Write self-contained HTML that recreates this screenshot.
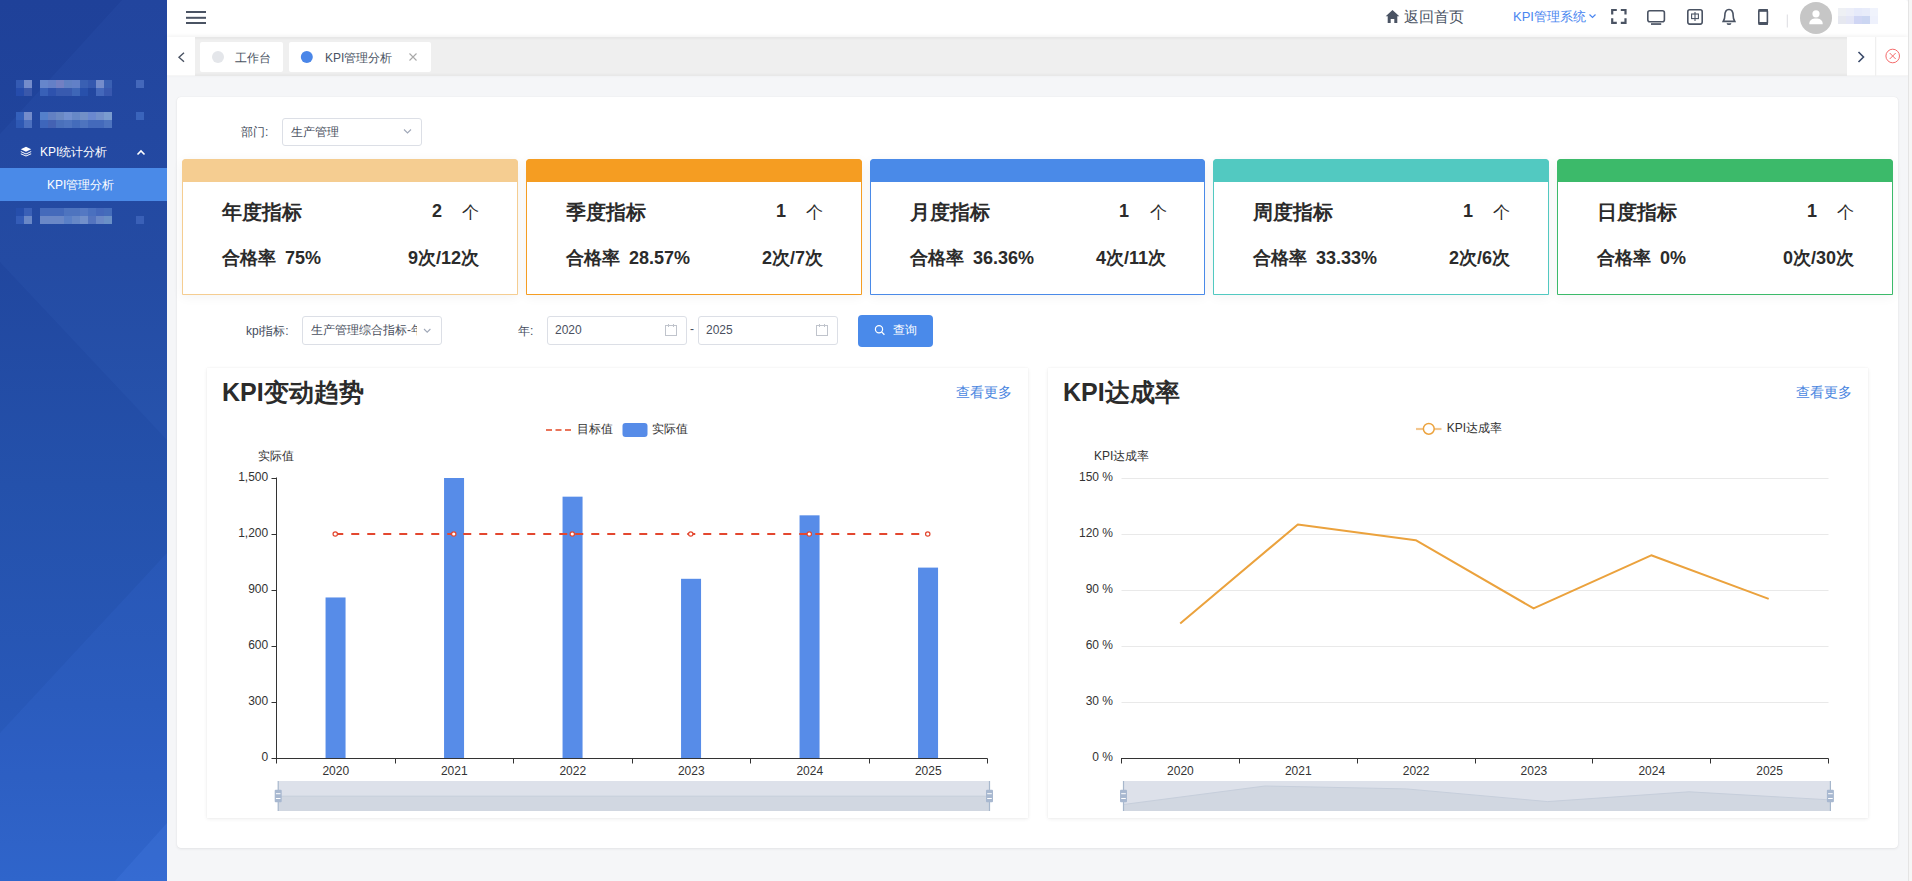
<!DOCTYPE html>
<html><head><meta charset="utf-8">
<style>
*{box-sizing:border-box;margin:0;padding:0}
html,body{width:1912px;height:881px;overflow:hidden;background:#f5f6f8;font-family:"Liberation Sans",sans-serif;color:#333}
.a{position:absolute}
#side{left:0;top:0;width:167px;height:881px;background:linear-gradient(180deg,#1f3e97 0%,#2350a9 45%,#2a5cc0 80%,#2e63c9 100%);overflow:hidden}
#hdr{left:167px;top:0;width:1741px;height:37.5px;background:#fff;border-top-right-radius:3px}
#tabs{left:167px;top:37px;width:1741px;height:38.6px;background:#efefef;box-shadow:inset 0 2px 2px rgba(0,0,0,.035),inset 0 -2px 2px rgba(0,0,0,.03),0 -1px 4px rgba(0,0,0,.06)}
#strip{left:1908px;top:0;width:4px;height:881px;background:#f6f6f6;border-left:1px solid #e4e4e4}
#main{left:177px;top:97px;width:1721px;height:751px;background:#fff;border-radius:4px;box-shadow:0 1px 3px rgba(0,0,0,.07),0 0 1px rgba(0,0,0,.1)}
.card{top:159px;width:336px;height:136px;border:1px solid;border-radius:4px 4px 0 0;background:#fff;box-shadow:0 2px 12px rgba(0,0,0,.05)}
.card .band{position:absolute;left:-1px;top:-1px;right:-1px;height:23px;border-radius:4px 4px 0 0}
.card .t{position:absolute;left:39px;top:37.3px;font-size:20px;font-weight:bold;color:#2b2b2b;line-height:30px}
.card .n{position:absolute;right:75px;top:36px;font-size:18px;font-weight:bold;color:#2b2b2b;line-height:30px}
.card .g{position:absolute;left:279px;top:37.5px;font-size:17px;color:#2b2b2b;line-height:30px}
.card .r{position:absolute;left:39px;top:82.8px;font-size:18px;font-weight:bold;color:#2b2b2b;line-height:30px;white-space:nowrap}
.card .c{position:absolute;right:38px;top:82.8px;font-size:18px;font-weight:bold;color:#2b2b2b;line-height:30px;white-space:nowrap}
.panel{top:368px;height:450px;background:#fff;box-shadow:0 1px 4px rgba(0,0,0,.07),0 0 1px rgba(0,0,0,.08)}
.ptitle{position:absolute;left:15px;top:7px;font-size:25px;font-weight:bold;color:#2b2b2b;line-height:34px}
.more{position:absolute;right:16px;top:14px;font-size:14px;color:#4a86e0;line-height:20px}
.inp{height:29px;border:1px solid #dcdfe6;border-radius:3px;background:#fff;font-size:12px;color:#4a5060;line-height:27px;padding-left:8px;white-space:nowrap;overflow:hidden}
</style></head><body>
<div id="side" class="a">
<svg width="167" height="881" style="position:absolute;left:0;top:0">
<defs><linearGradient id="sg" x1="0" y1="0" x2="0" y2="1">
<stop offset="0" stop-color="#1f4199"/><stop offset="0.3" stop-color="#21479f"/><stop offset="0.55" stop-color="#2451ab"/><stop offset="0.8" stop-color="#2858b8"/><stop offset="1" stop-color="#2d62c6"/></linearGradient></defs>
<rect width="167" height="881" fill="url(#sg)"/>
<polygon points="122,0 167,0 167,440 0,262 0,134" fill="#5a9aff" opacity="0.05"/>
<polygon points="0,733 167,553 167,881 0,881" fill="#4a88ff" opacity="0.09"/>
<polygon points="115,881 167,823 167,881" fill="#5a96ff" opacity="0.14"/>
<rect x="16" y="80" width="8" height="8" fill="#345ab3"/><rect x="24" y="80" width="8" height="8" fill="#748ccb"/><rect x="40" y="80" width="8" height="8" fill="#6686cb"/><rect x="48" y="80" width="8" height="8" fill="#6480c7"/><rect x="56" y="80" width="8" height="8" fill="#7280c3"/><rect x="64" y="80" width="8" height="8" fill="#6080c3"/><rect x="72" y="80" width="8" height="8" fill="#6280c7"/><rect x="80" y="80" width="8" height="8" fill="#3a60b3"/><rect x="88" y="80" width="8" height="8" fill="#3458af"/><rect x="96" y="80" width="8" height="8" fill="#748ccb"/><rect x="104" y="80" width="8" height="8" fill="#3a60b3"/><rect x="136" y="80" width="8" height="8" fill="#4468bb"/><rect x="16" y="88" width="8" height="8" fill="#264cab"/><rect x="24" y="88" width="8" height="8" fill="#3a58ab"/><rect x="40" y="88" width="8" height="8" fill="#3860b7"/><rect x="48" y="88" width="8" height="8" fill="#2e52ad"/><rect x="56" y="88" width="8" height="8" fill="#385aaf"/><rect x="64" y="88" width="8" height="8" fill="#385aaf"/><rect x="72" y="88" width="8" height="8" fill="#3e66b7"/><rect x="80" y="88" width="8" height="8" fill="#2850ab"/><rect x="96" y="88" width="8" height="8" fill="#4468bb"/><rect x="104" y="88" width="8" height="8" fill="#3858af"/><rect x="16" y="112" width="8" height="8" fill="#3460bb"/><rect x="24" y="112" width="8" height="8" fill="#748ccb"/><rect x="40" y="112" width="8" height="8" fill="#5480cb"/><rect x="48" y="112" width="8" height="8" fill="#6280c3"/><rect x="56" y="112" width="8" height="8" fill="#6a88c3"/><rect x="64" y="112" width="8" height="8" fill="#7290cf"/><rect x="72" y="112" width="8" height="8" fill="#6688c7"/><rect x="80" y="112" width="8" height="8" fill="#7290c7"/><rect x="88" y="112" width="8" height="8" fill="#6a88cf"/><rect x="96" y="112" width="8" height="8" fill="#7290cb"/><rect x="104" y="112" width="8" height="8" fill="#7a9ccf"/><rect x="136" y="112" width="8" height="8" fill="#3a64bb"/><rect x="16" y="120" width="8" height="8" fill="#2e58b3"/><rect x="24" y="120" width="8" height="8" fill="#4c70bf"/><rect x="40" y="120" width="8" height="8" fill="#3e66bb"/><rect x="48" y="120" width="8" height="8" fill="#4462b3"/><rect x="56" y="120" width="8" height="8" fill="#4a70bb"/><rect x="64" y="120" width="8" height="8" fill="#4e74bf"/><rect x="72" y="120" width="8" height="8" fill="#446cbb"/><rect x="80" y="120" width="8" height="8" fill="#4e74bf"/><rect x="88" y="120" width="8" height="8" fill="#446abb"/><rect x="96" y="120" width="8" height="8" fill="#446abb"/><rect x="104" y="120" width="8" height="8" fill="#4e74bf"/><rect x="16" y="208" width="8" height="8" fill="#264eab"/><rect x="24" y="208" width="8" height="8" fill="#3a60b7"/><rect x="40" y="208" width="8" height="8" fill="#446abb"/><rect x="48" y="208" width="8" height="8" fill="#446abb"/><rect x="56" y="208" width="8" height="8" fill="#446abb"/><rect x="64" y="208" width="8" height="8" fill="#4e74bf"/><rect x="72" y="208" width="8" height="8" fill="#4e74bf"/><rect x="80" y="208" width="8" height="8" fill="#5478c3"/><rect x="88" y="208" width="8" height="8" fill="#4a70bf"/><rect x="96" y="208" width="8" height="8" fill="#4468bb"/><rect x="104" y="208" width="8" height="8" fill="#446cbb"/><rect x="16" y="216" width="8" height="8" fill="#345cb7"/><rect x="24" y="216" width="8" height="8" fill="#6a88c7"/><rect x="40" y="216" width="8" height="8" fill="#6a88c7"/><rect x="48" y="216" width="8" height="8" fill="#6a88c7"/><rect x="56" y="216" width="8" height="8" fill="#6a88c7"/><rect x="64" y="216" width="8" height="8" fill="#5a80c7"/><rect x="72" y="216" width="8" height="8" fill="#6688c7"/><rect x="80" y="216" width="8" height="8" fill="#7290cb"/><rect x="88" y="216" width="8" height="8" fill="#5474bf"/><rect x="96" y="216" width="8" height="8" fill="#6a88c7"/><rect x="104" y="216" width="8" height="8" fill="#6a90c7"/><rect x="136" y="216" width="8" height="8" fill="#3a60b7"/>
<rect x="0" y="168" width="167" height="33" fill="#4a8ae8"/>
<g fill="#fff"><path d="M26 146.8 L31.2 149.3 L26 151.8 L20.8 149.3 Z"/><path d="M20.8 151 L26 153.4 L31.2 151 L31.2 152.1 L26 154.5 L20.8 152.1 Z"/><path d="M20.8 153.2 L26 155.6 L31.2 153.2 L31.2 154.2 L26 156.6 L20.8 154.2 Z"/></g>
<path d="M137.5 154.5 L141 151 L144.5 154.5" fill="none" stroke="#fff" stroke-width="1.6"/>
</svg>
<div class="a" style="left:40px;top:143px;font-size:12px;line-height:18px;color:#fff;white-space:nowrap">KPI统计分析</div>
<div class="a" style="left:47px;top:176px;font-size:12px;line-height:18px;color:#fff;white-space:nowrap">KPI管理分析</div>
</div>
<div id="hdr" class="a"></div>
<div id="tabs" class="a"></div>
<svg class="a" style="left:0;top:0" width="1912" height="80">
<g fill="#4a5363"><rect x="186" y="11" width="20" height="2"/><rect x="186" y="16.8" width="20" height="2"/><rect x="186" y="22" width="20" height="2"/></g>
<path d="M1392.5 10 L1399.3 16.3 L1397.3 16.3 L1397.3 23 L1394.3 23 L1394.3 19 L1390.7 19 L1390.7 23 L1387.7 23 L1387.7 16.3 L1385.7 16.3 Z" fill="#4a5363"/>
<path d="M1589.5 14.5 L1592.5 17.5 L1595.5 14.5" fill="none" stroke="#4a86f0" stroke-width="1.2"/>
<g fill="none" stroke="#4a5363" stroke-width="2.2">
<path d="M1612.2 14.6 V10 H1616.8"/><path d="M1620.8 10 H1625.5 V14.6"/><path d="M1612.2 18.2 V22.8 H1616.8"/><path d="M1620.8 22.8 H1625.5 V18.2"/>
</g>
<g fill="none" stroke="#4a5363" stroke-width="1.6">
<rect x="1647.8" y="10.8" width="16.6" height="11" rx="2"/>
<rect x="1687.8" y="9.7" width="14.4" height="14.4" rx="2"/>
<path d="M1729 9.5 C1725 9.5 1724.8 13 1724.8 16 C1724.8 19.5 1723.5 20.8 1723.2 21.4 H1734.8 C1734.5 20.8 1733.2 19.5 1733.2 16 C1733.2 13 1733 9.5 1729 9.5 Z"/>
<path d="M1727.3 23.3 C1727.6 24.6 1730.4 24.6 1730.7 23.3"/>
<rect x="1758.8" y="9.7" width="8.6" height="14.6" rx="1.5"/>
</g>
<rect x="1651" y="23.2" width="10.2" height="1.7" fill="#4a5363"/>
<rect x="1758.5" y="9.2" width="9.5" height="2.6" fill="#4a5363"/>
<rect x="1758.5" y="22" width="9.5" height="2.8" fill="#4a5363"/>
<g fill="none" stroke="#4a5363" stroke-width="1.1"><rect x="1691.6" y="14" width="6.8" height="4.6"/><path d="M1695 12 V21"/></g>
<rect x="1786.8" y="14.5" width="1" height="13" fill="#dcdde2"/>
<circle cx="1816" cy="17.9" r="16" fill="#c6c6c6"/>
<circle cx="1816" cy="13.8" r="3.6" fill="#fff"/>
<path d="M1809.3 24.2 C1809.3 19.8 1812.5 18.6 1816 18.6 C1819.5 18.6 1822.7 19.8 1822.7 24.2 Z" fill="#fff"/>
<rect x="1838" y="8" width="8" height="8" fill="#eef0f4"/><rect x="1846" y="8" width="8" height="8" fill="#eceef8"/><rect x="1854" y="8" width="8" height="8" fill="#e6eafa"/><rect x="1862" y="8" width="8" height="8" fill="#e8ecfa"/><rect x="1870" y="8" width="8" height="8" fill="#f0f3fc"/>
<rect x="1838" y="16" width="8" height="8" fill="#e6e8f0"/><rect x="1846" y="16" width="8" height="8" fill="#e4e6f6"/><rect x="1854" y="16" width="8" height="8" fill="#d0d6f4"/><rect x="1862" y="16" width="8" height="8" fill="#cbd6f2"/><rect x="1870" y="16" width="8" height="8" fill="#eef1fc"/>
<rect x="167" y="37" width="28" height="38.6" fill="#fff"/>
<path d="M184 52.8 L179 57.3 L184 61.8" fill="none" stroke="#4a5363" stroke-width="1.4"/>
<rect x="200" y="42" width="83" height="30" rx="2" fill="#fff"/>
<circle cx="218" cy="57" r="6" fill="#e4e6ea"/>
<rect x="289" y="42" width="142" height="30" rx="2" fill="#fff"/>
<circle cx="306.8" cy="57" r="6" fill="#4a86e8"/>
<path d="M409.5 53.5 L416.5 60.5 M416.5 53.5 L409.5 60.5" stroke="#a8a8a8" stroke-width="1.1"/>
<rect x="1847" y="37" width="61" height="38.6" fill="#fff"/>
<rect x="1875.3" y="37" width="0.9" height="38.6" fill="#e8e8e8"/>
<path d="M1858.5 52 L1863.5 57 L1858.5 62" fill="none" stroke="#3a4a6a" stroke-width="1.6"/>
<circle cx="1892.7" cy="56" r="6.8" fill="none" stroke="#f56c6c" stroke-width="1"/>
<path d="M1889.7 53 L1895.7 59 M1895.7 53 L1889.7 59" stroke="#f56c6c" stroke-width="1"/>
</svg>
<div class="a" style="left:1404px;top:7px;font-size:15px;line-height:20px;color:#4a5363;white-space:nowrap">返回首页</div>
<div class="a" style="left:1513px;top:8px;font-size:13px;line-height:18px;color:#4a86f0;white-space:nowrap">KPI管理系统</div>
<div class="a" style="left:235px;top:48.5px;font-size:12px;line-height:18px;color:#4a5363;white-space:nowrap">工作台</div>
<div class="a" style="left:325px;top:48.5px;font-size:12px;line-height:18px;color:#4a5363;white-space:nowrap">KPI管理分析</div>

<div id="strip" class="a"></div>
<div id="main" class="a"></div>
<div class="a" style="left:241px;top:122.5px;font-size:12px;line-height:18px;color:#454d5d;white-space:nowrap">部门:</div>
<div class="a inp" style="left:282px;top:118px;width:140px;height:28px;line-height:26px;padding-left:8px">生产管理</div>
<div class="a card" style="left:182px;width:336px;border-color:#f5cd91"><div class="band" style="background:#f5cd91"></div>
<div class="t">年度指标</div><div class="n">2</div><div class="g">个</div>
<div class="r">合格率<span style="margin-left:9px">75%</span></div><div class="c">9次/12次</div></div>
<div class="a card" style="left:526px;width:336px;border-color:#f59d22"><div class="band" style="background:#f59d22"></div>
<div class="t">季度指标</div><div class="n">1</div><div class="g">个</div>
<div class="r">合格率<span style="margin-left:9px">28.57%</span></div><div class="c">2次/7次</div></div>
<div class="a card" style="left:870px;width:335px;border-color:#4a8ae8"><div class="band" style="background:#4a8ae8"></div>
<div class="t">月度指标</div><div class="n">1</div><div class="g">个</div>
<div class="r">合格率<span style="margin-left:9px">36.36%</span></div><div class="c">4次/11次</div></div>
<div class="a card" style="left:1213px;width:336px;border-color:#52c9c1"><div class="band" style="background:#52c9c1"></div>
<div class="t">周度指标</div><div class="n">1</div><div class="g">个</div>
<div class="r">合格率<span style="margin-left:9px">33.33%</span></div><div class="c">2次/6次</div></div>
<div class="a card" style="left:1557px;width:336px;border-color:#3cba6a"><div class="band" style="background:#3cba6a"></div>
<div class="t">日度指标</div><div class="n">1</div><div class="g">个</div>
<div class="r">合格率<span style="margin-left:9px">0%</span></div><div class="c">0次/30次</div></div>
<div class="a" style="left:246px;top:322px;font-size:12px;line-height:18px;color:#454d5d;white-space:nowrap">kpi指标:</div>
<div class="a inp" style="left:302px;top:316px;width:140px;height:29px;padding-left:8px"><span style="display:inline-block;width:106px;overflow:hidden;vertical-align:top">生产管理综合指标-年度</span></div>
<div class="a" style="left:518px;top:322px;font-size:12px;line-height:18px;color:#454d5d;white-space:nowrap">年:</div>
<div class="a inp" style="left:547px;top:316px;width:140px;height:29px;padding-left:7px">2020</div>
<div class="a" style="left:690px;top:320px;font-size:12px;line-height:18px;color:#454d5d">-</div>
<div class="a inp" style="left:698px;top:316px;width:140px;height:29px;padding-left:7px">2025</div>
<div class="a" style="left:858px;top:315px;width:75px;height:32px;background:#4a8aea;border-radius:4px"></div>
<div class="a" style="left:893px;top:321px;font-size:12px;line-height:18px;color:#fff">查询</div>
<svg class="a" style="left:0;top:0" width="1912" height="360">
<path d="M404 129.5 L407.5 133 L411 129.5" fill="none" stroke="#a0a8b8" stroke-width="1.1"/>
<path d="M424 329 L427.2 332.2 L430.4 329" fill="none" stroke="#a0a8b8" stroke-width="1.1"/>
<g fill="none" stroke="#c0c4cc" stroke-width="1"><rect x="665.5" y="325.5" width="11" height="10"/><path d="M668.5 324 V327 M673.5 324 V327"/></g>
<g fill="none" stroke="#c0c4cc" stroke-width="1"><rect x="816.5" y="325.5" width="11" height="10"/><path d="M819.5 324 V327 M824.5 324 V327"/></g>
<circle cx="879" cy="329.3" r="3.6" fill="none" stroke="#fff" stroke-width="1.2"/>
<path d="M881.6 331.9 L884.4 334.7" stroke="#fff" stroke-width="1.3"/>
</svg>

<div class="a panel" style="left:207px;width:821px"><div class="ptitle">KPI变动趋势</div><div class="more">查看更多</div></div>
<div class="a panel" style="left:1048px;width:820px"><div class="ptitle">KPI达成率</div><div class="more">查看更多</div></div>
<svg class="a" style="left:0;top:0;font-family:&quot;Liberation Sans&quot;,sans-serif" width="1912" height="881"><line x1="276.5" y1="477.5" x2="276.5" y2="758.5" stroke="#333" stroke-width="1"/><line x1="271.5" y1="758.50" x2="276.5" y2="758.50" stroke="#333" stroke-width="1"/><text x="268.2" y="757.0" text-anchor="end" dominant-baseline="central" font-size="12" fill="#333" >0</text><line x1="271.5" y1="702.50" x2="276.5" y2="702.50" stroke="#333" stroke-width="1"/><text x="268.2" y="701.0" text-anchor="end" dominant-baseline="central" font-size="12" fill="#333" >300</text><line x1="271.5" y1="646.50" x2="276.5" y2="646.50" stroke="#333" stroke-width="1"/><text x="268.2" y="645.0" text-anchor="end" dominant-baseline="central" font-size="12" fill="#333" >600</text><line x1="271.5" y1="590.50" x2="276.5" y2="590.50" stroke="#333" stroke-width="1"/><text x="268.2" y="589.0" text-anchor="end" dominant-baseline="central" font-size="12" fill="#333" >900</text><line x1="271.5" y1="534.50" x2="276.5" y2="534.50" stroke="#333" stroke-width="1"/><text x="268.2" y="533.0" text-anchor="end" dominant-baseline="central" font-size="12" fill="#333" >1,200</text><line x1="271.5" y1="478.50" x2="276.5" y2="478.50" stroke="#333" stroke-width="1"/><text x="268.2" y="477.0" text-anchor="end" dominant-baseline="central" font-size="12" fill="#333" >1,500</text><line x1="276.0" y1="758.5" x2="987.5" y2="758.5" stroke="#333" stroke-width="1"/><line x1="276.50" y1="758.5" x2="276.50" y2="763.5" stroke="#333" stroke-width="1"/><line x1="395.50" y1="758.5" x2="395.50" y2="763.5" stroke="#333" stroke-width="1"/><line x1="513.50" y1="758.5" x2="513.50" y2="763.5" stroke="#333" stroke-width="1"/><line x1="632.50" y1="758.5" x2="632.50" y2="763.5" stroke="#333" stroke-width="1"/><line x1="750.50" y1="758.5" x2="750.50" y2="763.5" stroke="#333" stroke-width="1"/><line x1="869.50" y1="758.5" x2="869.50" y2="763.5" stroke="#333" stroke-width="1"/><line x1="987.50" y1="758.5" x2="987.50" y2="763.5" stroke="#333" stroke-width="1"/><rect x="325.55" y="597.47" width="20" height="160.53" fill="#578ce8"/><text x="335.75" y="770.8" text-anchor="middle" dominant-baseline="central" font-size="12" fill="#333" >2020</text><rect x="444.05" y="478.00" width="20" height="280.00" fill="#578ce8"/><text x="454.25" y="770.8" text-anchor="middle" dominant-baseline="central" font-size="12" fill="#333" >2021</text><rect x="562.55" y="496.67" width="20" height="261.33" fill="#578ce8"/><text x="572.75" y="770.8" text-anchor="middle" dominant-baseline="central" font-size="12" fill="#333" >2022</text><rect x="681.05" y="578.80" width="20" height="179.20" fill="#578ce8"/><text x="691.25" y="770.8" text-anchor="middle" dominant-baseline="central" font-size="12" fill="#333" >2023</text><rect x="799.55" y="515.33" width="20" height="242.67" fill="#578ce8"/><text x="809.75" y="770.8" text-anchor="middle" dominant-baseline="central" font-size="12" fill="#333" >2024</text><rect x="918.05" y="567.60" width="20" height="190.40" fill="#578ce8"/><text x="928.25" y="770.8" text-anchor="middle" dominant-baseline="central" font-size="12" fill="#333" >2025</text><line x1="335.25" y1="534.00" x2="928.25" y2="534.00" stroke="#e3472f" stroke-width="2" stroke-dasharray="8,8"/><circle cx="335.25" cy="534.00" r="2.2" fill="#fff" stroke="#e3472f" stroke-width="1.2"/><circle cx="453.75" cy="534.00" r="2.2" fill="#fff" stroke="#e3472f" stroke-width="1.2"/><circle cx="572.25" cy="534.00" r="2.2" fill="#fff" stroke="#e3472f" stroke-width="1.2"/><circle cx="690.75" cy="534.00" r="2.2" fill="#fff" stroke="#e3472f" stroke-width="1.2"/><circle cx="809.25" cy="534.00" r="2.2" fill="#fff" stroke="#e3472f" stroke-width="1.2"/><circle cx="927.75" cy="534.00" r="2.2" fill="#fff" stroke="#e3472f" stroke-width="1.2"/><text x="257.5" y="456" text-anchor="start" dominant-baseline="central" font-size="12" fill="#333" >实际值</text><line x1="546" y1="430" x2="572" y2="430" stroke="#ea7459" stroke-width="2" stroke-dasharray="6,3.5"/><text x="577" y="428.5" text-anchor="start" dominant-baseline="central" font-size="12" fill="#333" >目标值</text><rect x="622.5" y="423" width="25" height="14" rx="3" fill="#578ce8"/><text x="652" y="428.5" text-anchor="start" dominant-baseline="central" font-size="12" fill="#333" >实际值</text><rect x="278.2" y="781" width="711.3" height="30" fill="#dde1ea"/><polygon points="278.2,811 278.2,796.2 989.5,796.2 989.5,811" fill="#d1d7e1"/><polyline points="278.2,796.2 989.5,796.2" fill="none" stroke="#c6cedb" stroke-width="1"/><rect x="277.59999999999997" y="781" width="1.2" height="30" fill="#a7b7cc"/><rect x="274.7" y="789.7" width="7" height="12.5" rx="1" fill="#a8b8d0"/><rect x="275.9" y="793.2" width="4.6" height="1" fill="#fff"/><rect x="275.9" y="798" width="4.6" height="1" fill="#fff"/><rect x="988.9" y="781" width="1.2" height="30" fill="#a7b7cc"/><rect x="986.0" y="789.7" width="7" height="12.5" rx="1" fill="#a8b8d0"/><rect x="987.2" y="793.2" width="4.6" height="1" fill="#fff"/><rect x="987.2" y="798" width="4.6" height="1" fill="#fff"/><line x1="1121.5" y1="702.50" x2="1828.5" y2="702.50" stroke="#e9e9e9" stroke-width="1"/><line x1="1121.5" y1="646.50" x2="1828.5" y2="646.50" stroke="#e9e9e9" stroke-width="1"/><line x1="1121.5" y1="590.50" x2="1828.5" y2="590.50" stroke="#e9e9e9" stroke-width="1"/><line x1="1121.5" y1="534.50" x2="1828.5" y2="534.50" stroke="#e9e9e9" stroke-width="1"/><line x1="1121.5" y1="478.50" x2="1828.5" y2="478.50" stroke="#e9e9e9" stroke-width="1"/><text x="1113" y="757.0" text-anchor="end" dominant-baseline="central" font-size="12" fill="#333" >0 %</text><text x="1113" y="701.0" text-anchor="end" dominant-baseline="central" font-size="12" fill="#333" >30 %</text><text x="1113" y="645.0" text-anchor="end" dominant-baseline="central" font-size="12" fill="#333" >60 %</text><text x="1113" y="589.0" text-anchor="end" dominant-baseline="central" font-size="12" fill="#333" >90 %</text><text x="1113" y="533.0" text-anchor="end" dominant-baseline="central" font-size="12" fill="#333" >120 %</text><text x="1113" y="477.0" text-anchor="end" dominant-baseline="central" font-size="12" fill="#333" >150 %</text><line x1="1121.0" y1="758.5" x2="1828.5" y2="758.5" stroke="#333" stroke-width="1"/><line x1="1121.50" y1="758.5" x2="1121.50" y2="763.5" stroke="#333" stroke-width="1"/><line x1="1239.50" y1="758.5" x2="1239.50" y2="763.5" stroke="#333" stroke-width="1"/><line x1="1357.50" y1="758.5" x2="1357.50" y2="763.5" stroke="#333" stroke-width="1"/><line x1="1475.50" y1="758.5" x2="1475.50" y2="763.5" stroke="#333" stroke-width="1"/><line x1="1592.50" y1="758.5" x2="1592.50" y2="763.5" stroke="#333" stroke-width="1"/><line x1="1710.50" y1="758.5" x2="1710.50" y2="763.5" stroke="#333" stroke-width="1"/><line x1="1828.50" y1="758.5" x2="1828.50" y2="763.5" stroke="#333" stroke-width="1"/><text x="1180.4166666666667" y="770.8" text-anchor="middle" dominant-baseline="central" font-size="12" fill="#333" >2020</text><text x="1298.25" y="770.8" text-anchor="middle" dominant-baseline="central" font-size="12" fill="#333" >2021</text><text x="1416.0833333333333" y="770.8" text-anchor="middle" dominant-baseline="central" font-size="12" fill="#333" >2022</text><text x="1533.9166666666665" y="770.8" text-anchor="middle" dominant-baseline="central" font-size="12" fill="#333" >2023</text><text x="1651.75" y="770.8" text-anchor="middle" dominant-baseline="central" font-size="12" fill="#333" >2024</text><text x="1769.5833333333333" y="770.8" text-anchor="middle" dominant-baseline="central" font-size="12" fill="#333" >2025</text><polyline points="1180.2,623.6 1297.8,524.4 1415.7,540.2 1533.6,608.4 1651.2,555.3 1768.7,598.9" fill="none" stroke="#eba23d" stroke-width="2" stroke-linejoin="round"/><text x="1094" y="456" text-anchor="start" dominant-baseline="central" font-size="12" fill="#333" >KPI达成率</text><line x1="1416" y1="429" x2="1441.5" y2="429" stroke="#f3c68e" stroke-width="2.2"/><circle cx="1428.8" cy="428.8" r="5.4" fill="#fff" stroke="#eca33e" stroke-width="1.5"/><text x="1446.7" y="428" text-anchor="start" dominant-baseline="central" font-size="12" fill="#333" >KPI达成率</text><rect x="1123.5" y="781" width="706.9000000000001" height="30" fill="#dde1ea"/><polygon points="1123.5,811 1123.5,804.5 1264.9,786.0 1406.3,788.9 1547.6,801.6 1689.0,791.8 1830.4,799.9 1830.4,811" fill="#d1d7e1"/><polyline points="1123.5,804.5 1264.9,786.0 1406.3,788.9 1547.6,801.6 1689.0,791.8 1830.4,799.9" fill="none" stroke="#c6cedb" stroke-width="1"/><rect x="1122.9" y="781" width="1.2" height="30" fill="#a7b7cc"/><rect x="1120.0" y="789.7" width="7" height="12.5" rx="1" fill="#a8b8d0"/><rect x="1121.2" y="793.2" width="4.6" height="1" fill="#fff"/><rect x="1121.2" y="798" width="4.6" height="1" fill="#fff"/><rect x="1829.8000000000002" y="781" width="1.2" height="30" fill="#a7b7cc"/><rect x="1826.9" y="789.7" width="7" height="12.5" rx="1" fill="#a8b8d0"/><rect x="1828.1000000000001" y="793.2" width="4.6" height="1" fill="#fff"/><rect x="1828.1000000000001" y="798" width="4.6" height="1" fill="#fff"/></svg>

</body></html>
